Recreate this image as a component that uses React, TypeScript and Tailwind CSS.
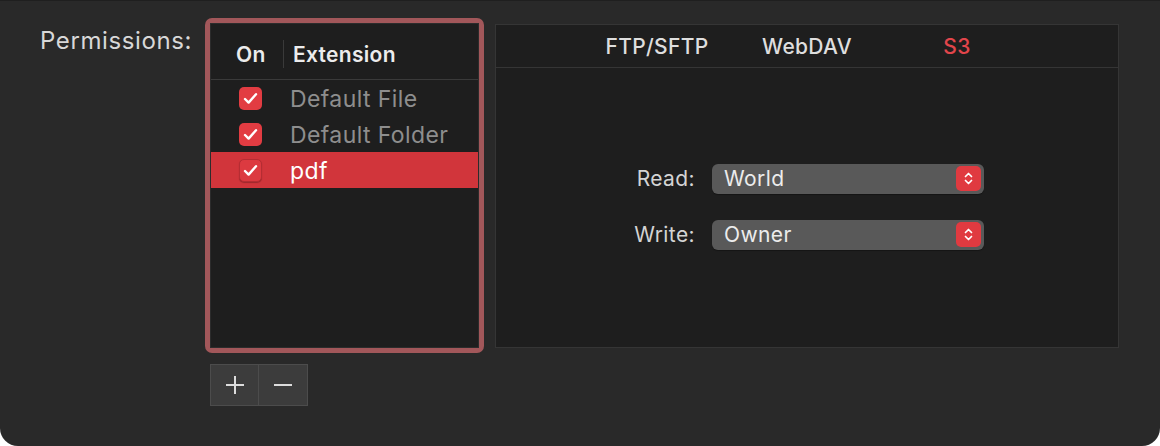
import React from "react";

const font = { fontFamily: "Inter, 'Liberation Sans', sans-serif" };

function Check({ selected }: { selected?: boolean }) {
  return (
    <div
      className={
        "w-[23px] h-[23px] rounded-[5px] flex items-center justify-center " +
        (selected ? "bg-[#dc3a40] border border-[#b52d33] shadow-[0_1px_1px_rgba(0,0,0,0.25)]" : "bg-[#e23c42]")
      }
    >
      <svg width="15" height="13" viewBox="0 0 15 13" fill="none">
        <path d="M2 7 L5.6 10.6 L13 2.2" stroke="white" strokeWidth="2.4" strokeLinecap="round" strokeLinejoin="round" />
      </svg>
    </div>
  );
}

function Popup({ value }: { value: string }) {
  return (
    <div className="w-[272px] h-[30px] rounded-[6px] bg-[#595959] flex items-center justify-between pl-[12px] pr-[3px] shadow-[0_1px_1px_rgba(0,0,0,0.3)]">
      <span className="text-[21px] tracking-[0.4px] text-[#ececec] leading-none">{value}</span>
      <div className="w-[25px] h-[25px] rounded-[5px] bg-[#e03a40] flex items-center justify-center">
        <svg width="11" height="15" viewBox="0 0 11 15" fill="none">
          <path d="M2.5 5.5 L5.5 2.5 L8.5 5.5" stroke="white" strokeWidth="1.7" strokeLinecap="round" strokeLinejoin="round" />
          <path d="M2.5 9.5 L5.5 12.5 L8.5 9.5" stroke="white" strokeWidth="1.7" strokeLinecap="round" strokeLinejoin="round" />
        </svg>
      </div>
    </div>
  );
}

export default function App() {
  const rows = [
    { name: "Default File", selected: false },
    { name: "Default Folder", selected: false },
    { name: "pdf", selected: true },
  ];
  return (
    <div className="w-[1160px] h-[446px] bg-white" style={font}>
      <div className="w-full h-full bg-[#292929] rounded-b-[18px] border-t border-[#1f1f1f] overflow-hidden">
        <div className="flex pt-[17px]">
          <div className="w-[192px] text-right pt-[10px] text-[24px] leading-[26px] text-[#d8d8d8] tracking-[0.6px]">
            Permissions:
          </div>
          <div className="ml-[13px] flex flex-col">
            <div className="w-[279px] h-[335px] rounded-[7px] bg-[#a2575a] p-[5px]">
              <div className="w-full h-full bg-[#1e1e1e] border border-[#2c2c2c] flex flex-col">
                <div className="h-[56px] border-b border-[#3a3a3a] flex items-center shrink-0 pt-[5px]">
                  <span className="ml-[25px] w-[32px] text-[21px] tracking-[0.4px] font-semibold text-[#ececec] leading-none">On</span>
                  <div className="ml-[15px] w-px h-[28px] bg-[#3a3a3a]" />
                  <span className="ml-[9px] text-[21px] tracking-[0.3px] font-semibold text-[#ececec] leading-none">Extension</span>
                </div>
                {rows.map((r) => (
                  <div
                    key={r.name}
                    className={"h-[36px] flex items-center shrink-0 " + (r.selected ? "bg-[#d1353b]" : "")}
                  >
                    <div className="ml-[28px]">
                      <Check selected={r.selected} />
                    </div>
                    <span
                      className={
                        "ml-[28px] mt-[3px] text-[23px] tracking-[0.4px] leading-none " + (r.selected ? "text-white" : "text-[#8e8e8e]")
                      }
                    >
                      {r.name}
                    </span>
                  </div>
                ))}
              </div>
            </div>
            <div className="mt-[11px] ml-[5px] flex w-[98px] h-[42px] border border-[#4c4c4c] bg-[#3c3c3c]">
              <div className="w-[48px] h-full flex items-center justify-center border-r border-[#4c4c4c]">
                <svg width="22" height="22" viewBox="0 0 22 22">
                  <path d="M11 2 V20 M2 11 H20" stroke="#dcdcdc" strokeWidth="2" />
                </svg>
              </div>
              <div className="flex-1 h-full flex items-center justify-center">
                <svg width="22" height="22" viewBox="0 0 22 22">
                  <path d="M2 11 H20" stroke="#dcdcdc" strokeWidth="2" />
                </svg>
              </div>
            </div>
          </div>
          <div className="ml-[11px] mt-[6px] w-[624px] h-[324px] border border-[#353535] bg-[#1e1e1e] flex flex-col">
            <div className="h-[43px] border-b border-[#353535] flex items-center justify-center shrink-0">
              <span className="w-[150px] text-center text-[21px] tracking-[0.3px] font-medium text-[#dedede] leading-none">FTP/SFTP</span>
              <span className="w-[150px] text-center text-[21px] tracking-[0.3px] font-medium text-[#dedede] leading-none">WebDAV</span>
              <span className="w-[150px] text-center text-[21px] tracking-[0.3px] font-medium text-[#e2454b] leading-none">S3</span>
            </div>
            <div className="flex-1 flex flex-col justify-center gap-[26px] pl-[119px] pb-[2px]">
              <div className="flex items-center">
                <span className="w-[80px] text-right text-[21px] tracking-[0.4px] text-[#d4d4d4] leading-none">Read:</span>
                <div className="ml-[17px]">
                  <Popup value="World" />
                </div>
              </div>
              <div className="flex items-center">
                <span className="w-[80px] text-right text-[21px] tracking-[0.4px] text-[#d4d4d4] leading-none">Write:</span>
                <div className="ml-[17px]">
                  <Popup value="Owner" />
                </div>
              </div>
            </div>
          </div>
        </div>
      </div>
    </div>
  );
}
